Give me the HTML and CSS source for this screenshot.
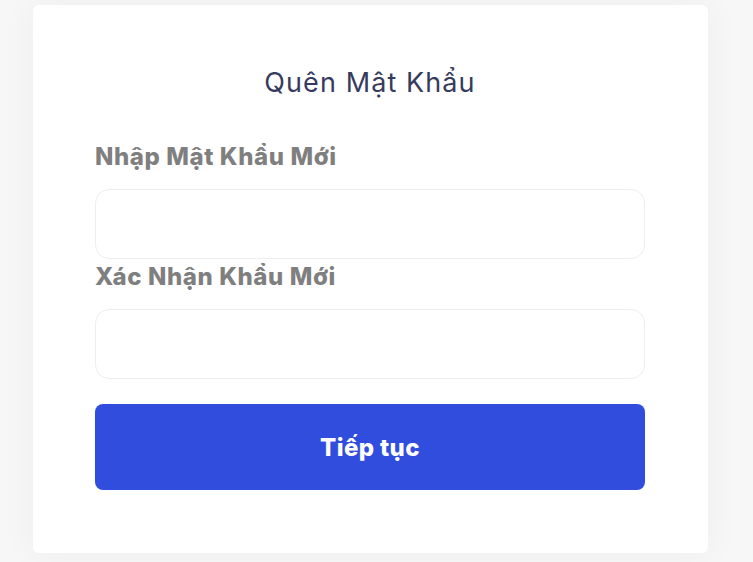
FILE: index.html
```html
<!DOCTYPE html>
<html lang="vi">
<head>
<meta charset="utf-8">
<title>Quên Mật Khẩu</title>
<link rel="stylesheet" href="styles.css">
</head>
<body>
<main class="page">
  <form class="card">
    <h1 class="title">Quên Mật Khẩu</h1>
    <label class="label" for="pw1">Nhập Mật Khẩu Mới</label>
    <input class="field" id="pw1" type="password">
    <label class="label label-second" for="pw2">Xác Nhận Khẩu Mới</label>
    <input class="field" id="pw2" type="password">
    <button class="submit" type="button">Tiếp tục</button>
  </form>
</main>
</body>
</html>
```

FILE: styles.css
```css
* { box-sizing: border-box; }
html, body { margin: 0; padding: 0; }
body {
  background: #f7f7f7;
  font-family: Inter, "Noto Sans", sans-serif;
  height: 562px;
  overflow: hidden;
}
.page {
  padding: 5px 0 0 33px;
}
.card {
  width: 675px;
  background: #ffffff;
  border-radius: 6px;
  box-shadow: 0 0 40px rgba(0, 0, 0, 0.045);
  padding: 58px 63px 63px 62px;
  display: flex;
  flex-direction: column;
}
.title {
  margin: 0 0 38px;
  font-size: 27px;
  line-height: 40px;
  font-weight: 400;
  letter-spacing: 1.1px;
  color: #363b5e;
  text-align: center;
}
.label {
  font-size: 24px;
  line-height: 32px;
  font-weight: 800;
  letter-spacing: 0.6px;
  color: #7f7f7f;
  margin-bottom: 16px;
}
.label-second { margin-top: 2px; }
.field {
  height: 70px;
  border: 1px solid #eeeeee;
  border-radius: 14px;
  background: #fff;
  outline: none;
}
.submit {
  margin-top: 25px;
  height: 86px;
  border: none;
  border-radius: 8px;
  background: #304ddd;
  color: #ffffff;
  font-family: inherit;
  font-size: 24px;
  font-weight: 800;
  letter-spacing: 0.4px;
}
```
